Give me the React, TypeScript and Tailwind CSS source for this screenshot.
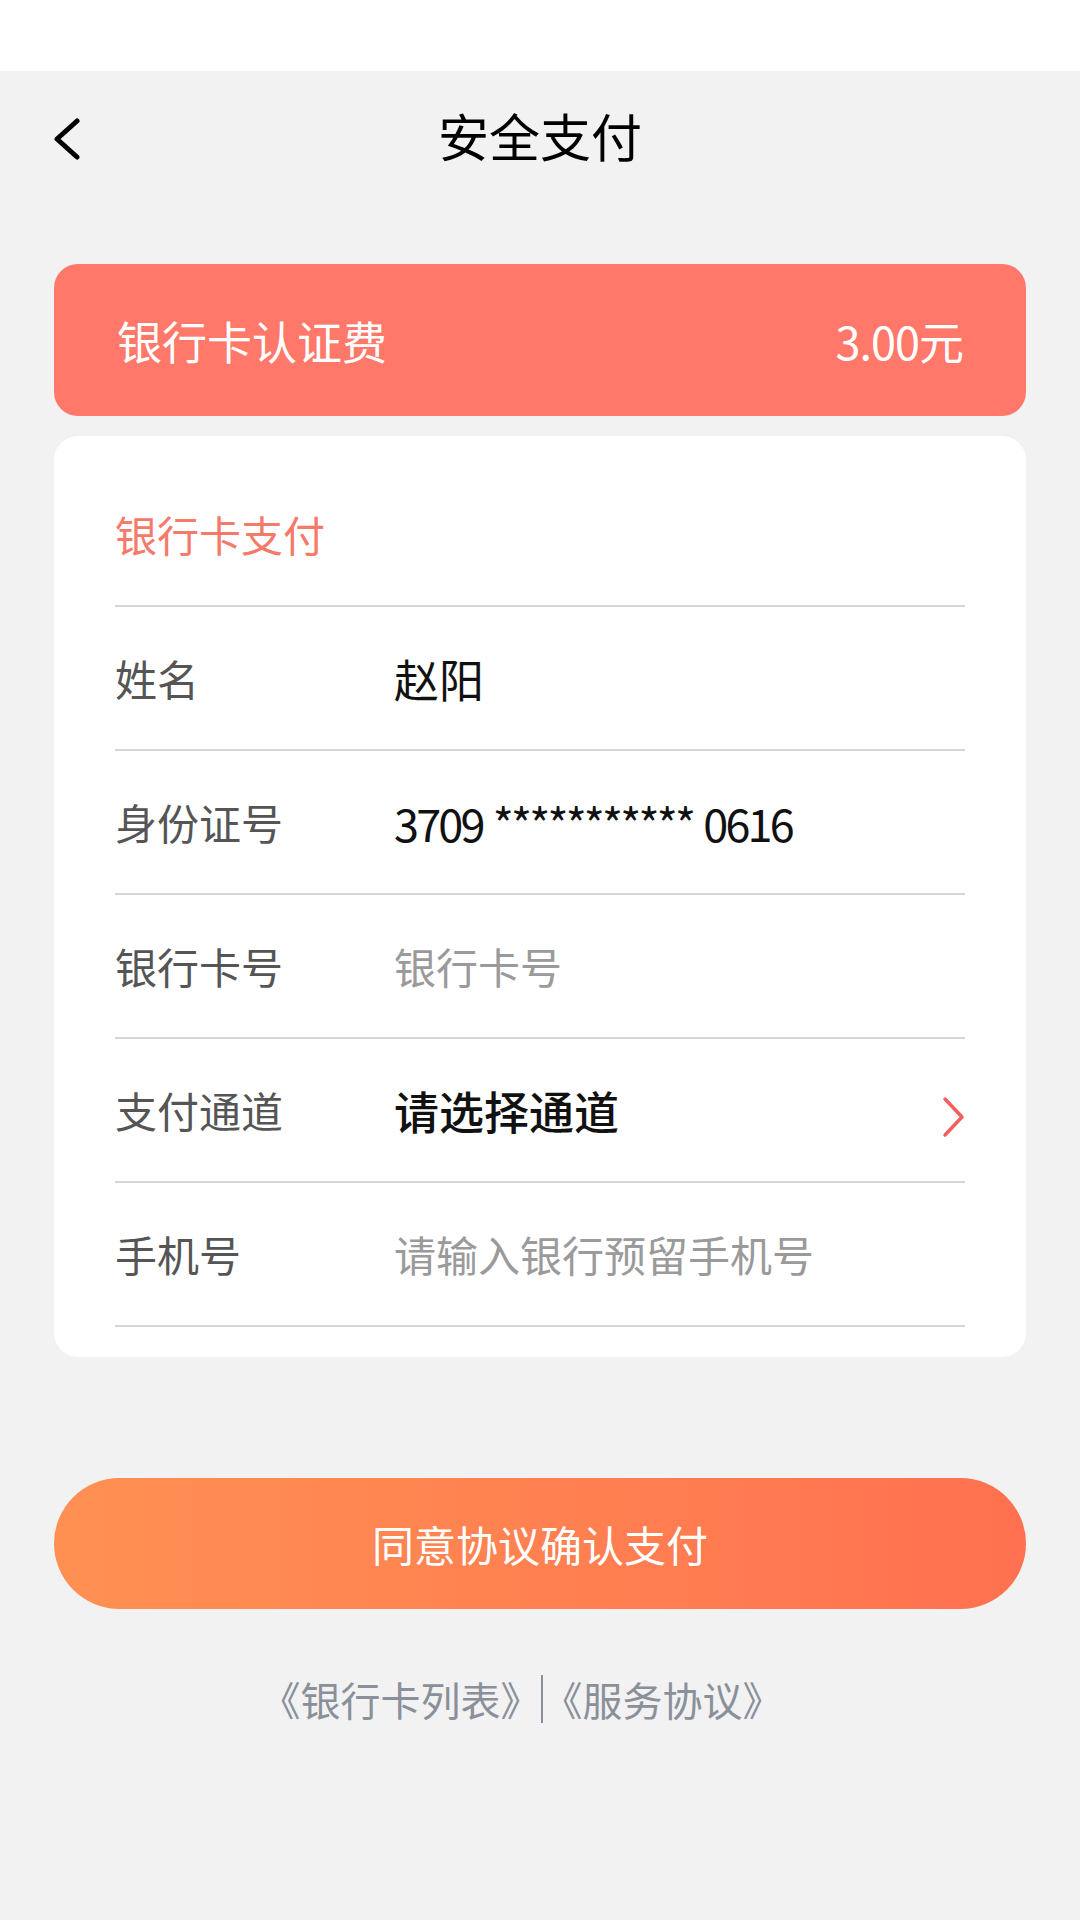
import React from "react";

const FONT = "font-['Noto_Sans_CJK_SC','Noto_Sans',sans-serif]";

function Row({
  label,
  children,
}: {
  label: string;
  children: React.ReactNode;
}) {
  return (
    <div className="h-[144px] flex items-center border-b-2 border-[#d6d6d6]">
      <div className="w-[279px] shrink-0 text-[42px] leading-none text-[#555555]">{label}</div>
      <div className="flex-1 flex items-center">{children}</div>
    </div>
  );
}

export default function App() {
  return (
    <div className={`w-[1080px] h-[1920px] bg-[#f2f2f2] ${FONT}`}>
      <div className="h-[71px] bg-white" />
      <div className="h-[128px] relative flex items-center justify-center">
        <svg
          className="absolute left-[50px] top-[47px]"
          width="32"
          height="42"
          viewBox="0 0 32 42"
          fill="none"
        >
          <path d="M27 3 L7 21 L27 39" stroke="#000" strokeWidth="5" strokeLinecap="round" strokeLinejoin="round" />
        </svg>
        <div className="text-[51px] leading-none text-black">安全支付</div>
      </div>

      <div className="mx-[54px] mt-[65px] h-[152px] rounded-[24px] bg-[#ff786a] px-[63px] flex items-center justify-between text-white">
        <span className="text-[45px] leading-none">银行卡认证费</span>
        <span className="text-[45px] leading-none tracking-[-1px]">3.00元</span>
      </div>

      <div className="mx-[54px] mt-[20px] rounded-[24px] bg-white px-[61px] pb-[30px]">
        <div className="h-[171px] pt-[26px] flex items-center border-b-2 border-[#d6d6d6]">
          <span className="text-[42px] leading-none text-[#f47a6a]">银行卡支付</span>
        </div>
        <Row label="姓名">
          <span className="text-[45px] leading-none text-[#111]">赵阳</span>
        </Row>
        <Row label="身份证号">
          <span className="text-[45px] leading-none text-[#111] tracking-[-2.8px]">
            3709<span className="tracking-normal"> </span>***********<span className="tracking-normal"> </span>0616
          </span>
        </Row>
        <Row label="银行卡号">
          <span className="text-[42px] leading-none text-[#9a9a9a]">银行卡号</span>
        </Row>
        <Row label="支付通道">
          <span className="text-[45px] leading-none text-[#111] font-medium">请选择通道</span>
          <svg className="ml-auto mt-[14px]" width="24" height="42" viewBox="0 0 24 42" fill="none">
            <path d="M4 3 L21 21 L4 39" stroke="#f25f5c" strokeWidth="3.5" strokeLinecap="round" strokeLinejoin="round" />
          </svg>
        </Row>
        <Row label="手机号">
          <span className="text-[42px] leading-none text-[#9a9a9a]">请输入银行预留手机号</span>
        </Row>
      </div>

      <div className="mx-[54px] mt-[121px] h-[131px] rounded-full bg-gradient-to-r from-[#ff9052] to-[#ff7150] flex items-center justify-center">
        <span className="text-[42px] leading-none text-white">同意协议确认支付</span>
      </div>

      <div className="mt-[66px] pr-[37px] flex items-center justify-center text-[40px] leading-none text-[#8a9099]">
        <span>《银行卡列表》</span>
        <span className="w-[2px] h-[48px] bg-[#8a9099]" />
        <span>《服务协议》</span>
      </div>
    </div>
  );
}
